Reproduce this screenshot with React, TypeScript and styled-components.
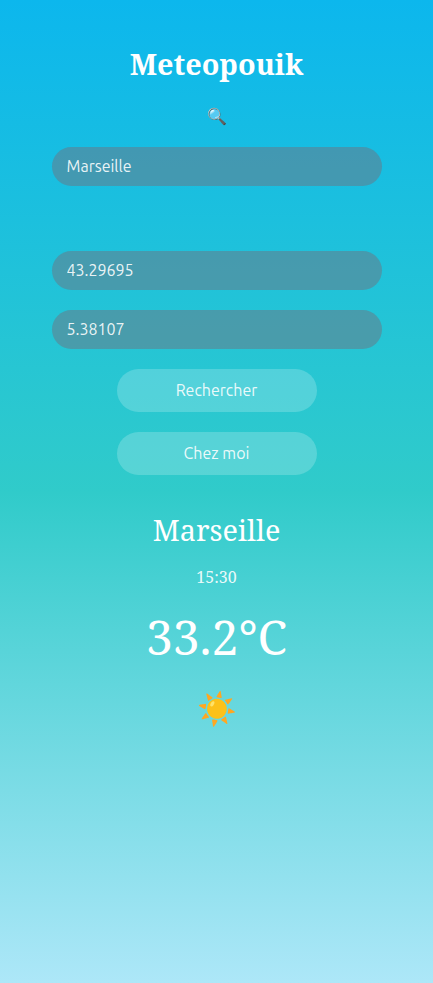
import React from "react";
import styled, { createGlobalStyle } from "styled-components";

const GlobalStyle = createGlobalStyle`
  * { box-sizing: border-box; }
  body { margin: 0; }
`;

const Page = styled.main`
  height: 983px;
  display: flex;
  flex-direction: column;
  align-items: center;
  background: linear-gradient(#0cb7ed 0%, #30cbca 50%, #ade7f8 100%);
  color: #fff;
  font-family: "Noto Serif", "Droid Serif", "DejaVu Serif", serif;
`;
const Title = styled.h1`
  margin: 42px 0 0;
  font-size: 28.8px;
  line-height: 43px;
`;
const Loupe = styled.div`
  margin-top: 20px;
  height: 22px;
  font-size: 16px;
  line-height: 22px;
`;
const Field = styled.input<{ $gap: number }>`
  margin: ${(p) => p.$gap}px 0 0;
  width: 330px;
  height: 39px;
  padding: 0 15px 2px;
  border: 0;
  border-radius: 20px;
  background: rgba(110, 115, 130, 0.5);
  color: rgba(255, 255, 255, 0.9);
  font: 16px Ubuntu, "Noto Sans", sans-serif;
`;
const Button = styled.button`
  margin: 20px 0 0;
  width: 200px;
  height: 43px;
  padding: 0 0 2px;
  border: 0;
  border-radius: 22px;
  background: rgba(255, 255, 255, 0.2);
  color: rgba(255, 255, 255, 0.9);
  font: 16px Ubuntu, "Noto Sans", sans-serif;
`;
const City = styled.h2`
  margin: 33px 0 0;
  font-size: 28.8px;
  font-weight: 400;
  line-height: 43px;
`;
const Time = styled.time`
  margin-top: 15px;
  color: rgba(255, 255, 255, 0.9);
  font-size: 16px;
  line-height: 22px;
`;
const Temperature = styled.div`
  margin-top: 16px;
  font-size: 48px;
  line-height: 66px;
`;
const Weather = styled.div`
  margin-top: 16px;
  font-size: 32px;
`;

export default function App() {
  return (
    <Page>
      <GlobalStyle />
      <Title>Meteopouik</Title>
      <Loupe>🔍</Loupe>
      <Field $gap={20} defaultValue="Marseille" />
      <Field $gap={65} defaultValue="43.29695" />
      <Field $gap={20} defaultValue="5.38107" />
      <Button>Rechercher</Button>
      <Button>Chez moi</Button>
      <City>Marseille</City>
      <Time>15:30</Time>
      <Temperature>33.2°C</Temperature>
      <Weather>☀️</Weather>
    </Page>
  );
}
